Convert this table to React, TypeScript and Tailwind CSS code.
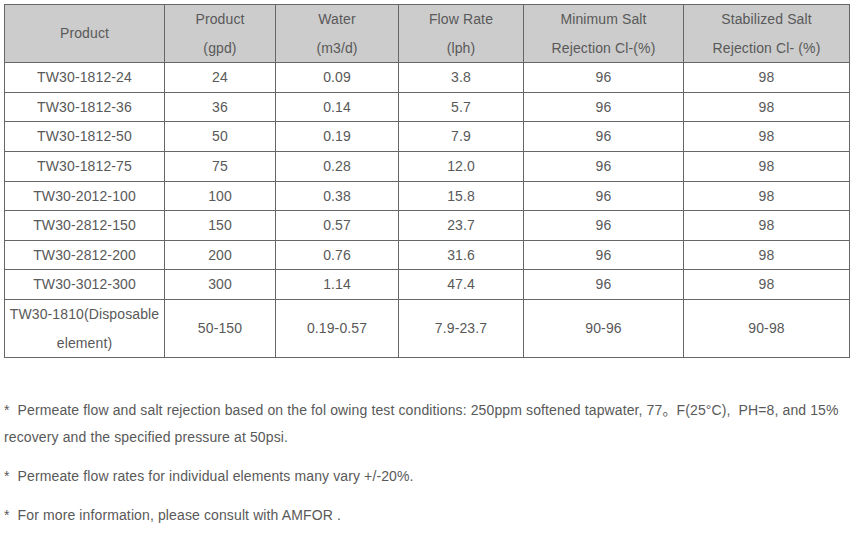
import React from "react";

const rows: string[][] = [
  ["TW30-1812-24", "24", "0.09", "3.8", "96", "98"],
  ["TW30-1812-36", "36", "0.14", "5.7", "96", "98"],
  ["TW30-1812-50", "50", "0.19", "7.9", "96", "98"],
  ["TW30-1812-75", "75", "0.28", "12.0", "96", "98"],
  ["TW30-2012-100", "100", "0.38", "15.8", "96", "98"],
  ["TW30-2812-150", "150", "0.57", "23.7", "96", "98"],
  ["TW30-2812-200", "200", "0.76", "31.6", "96", "98"],
  ["TW30-3012-300", "300", "1.14", "47.4", "96", "98"],
];

const cell = "border border-[#666] p-0 text-center align-middle leading-[28.6px]";

export default function App() {
  return (
    <div
      className="p-1 bg-white text-[14px] text-[#595959] min-h-[533px] tracking-[0.12px]"
      style={{ fontFamily: '"Liberation Sans", Arial, "Noto Sans CJK SC", sans-serif' }}
    >
      <table className="w-[845px] table-fixed border-collapse">
        <colgroup>
          <col className="w-[160px]" />
          <col className="w-[111px]" />
          <col className="w-[123px]" />
          <col className="w-[125px]" />
          <col className="w-[160px]" />
          <col className="w-[166px]" />
        </colgroup>
        <thead>
          <tr className="bg-[#cccccc]">
            <td className={cell}>Product</td>
            <td className={cell}>Product<br />(gpd)</td>
            <td className={cell}>Water<br />(m3/d)</td>
            <td className={cell}>Flow Rate<br />(lph)</td>
            <td className={cell}>Minimum Salt<br />Rejection Cl-(%)</td>
            <td className={cell}>Stabilized Salt<br />Rejection Cl- (%)</td>
          </tr>
        </thead>
        <tbody>
          {rows.map((r, i) => (
            <tr key={i}>
              {r.map((c, j) => (
                <td key={j} className={cell}>{c}</td>
              ))}
            </tr>
          ))}
          <tr>
            <td className={cell}>TW30-1810(Disposable<br />element)</td>
            <td className={cell}>50-150</td>
            <td className={cell}>0.19-0.57</td>
            <td className={cell}>7.9-23.7</td>
            <td className={cell}>90-96</td>
            <td className={cell}>90-98</td>
          </tr>
        </tbody>
      </table>

      <div className="mt-[39px] w-[845px] leading-[27px]">
        <p className="mb-[12px]">
          *&nbsp;&nbsp;Permeate flow and salt rejection based on the fol owing test conditions: 250ppm softened tapwater, 77。F(25°C),&nbsp;&nbsp;PH=8, and 15% recovery and the specified pressure at 50psi.
        </p>
        <p className="mb-[12px]">*&nbsp;&nbsp;Permeate flow rates for individual elements many vary +/-20%.</p>
        <p>*&nbsp;&nbsp;For more information, please consult with AMFOR .</p>
      </div>
    </div>
  );
}
